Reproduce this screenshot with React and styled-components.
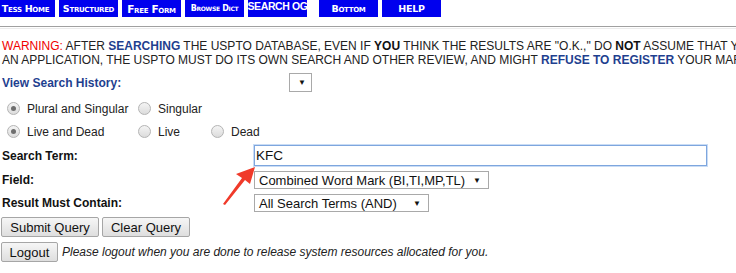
import React from 'react'
import styled, { createGlobalStyle } from 'styled-components'

const GlobalStyle = createGlobalStyle`
  html, body {
    margin: 0;
    padding: 0;
    background: #fff;
    overflow: hidden;
  }
  body {
    font-family: "Liberation Sans", Arial, sans-serif;
    font-size: 12px;
    color: #222;
  }
`;

const navItems = [
    { label: 'Tess Home', kind: 'caps' },
    { label: 'Structured', kind: 'caps' },
    { label: 'Free Form', kind: 'caps', big: true },
    { label: 'Browse Dict', kind: 'tiny' },
    { label: 'SEARCH OG', kind: 'plain' },
    { label: 'Bottom', kind: 'caps', gap: 12 },
    { label: 'HELP', kind: 'help' },
];

const Page = styled.div`
  position: relative;
  width: 1000px;
  padding-left: 2px;
`;

const NavBar = styled.div`
  display: flex;
  gap: 4px;
  height: 17px;
  margin-left: -6px;
`;

const NavButton = styled.div`
  width: 59px;
  height: 17px;
  flex: none;
  background: #0000ee;
  color: #fff;
  display: flex;
  align-items: ${p => (p.$kind === 'plain' ? 'flex-start' : 'center')};
  justify-content: center;
  font-family: ${p => (p.$kind === 'plain' ? '"Liberation Sans", Arial' : '"DejaVu Sans"')}, sans-serif;
  font-weight: bold;
  white-space: nowrap;
  overflow: hidden;
  margin-left: ${p => (p.$gap ? `${p.$gap - 4}px` : '0')};
  font-variant: ${p => (p.$kind === 'caps' || p.$kind === 'tiny' ? 'small-caps' : 'normal')};
  font-size: ${p =>
        p.$kind === 'plain' ? '10.5px' : p.$kind === 'tiny' ? '8px' : p.$big ? '10.5px' : '9.5px'};
  letter-spacing: ${p => (p.$kind === 'plain' ? '-0.4px' : '-0.3px')};
  line-height: ${p => (p.$kind === 'plain' ? '13px' : '17px')};
  padding-top: ${p => (p.$big ? '2px' : '0')};
  box-sizing: border-box;
`;

const Rule = styled.div`
  margin: 9px 0 0 -2px;
  height: 1px;
  border-top: 1px solid #a0a0a0;
  border-bottom: 1px solid #ececec;
`;

const Warning = styled.div`
  margin-top: 10px;
  font-size: 12px;
  line-height: 14px;
  white-space: nowrap;
  color: #222;
`;

const Red = styled.span`
  color: #f00000;
`;

const Strong = styled.b`
  color: ${p => (p.$navy ? '#1f3f8f' : '#111')};
`;

const Form = styled.div`
  display: flex;
  flex-direction: column;
  gap: 5px;
  margin-top: 6px;
`;

const Row = styled.div`
  display: flex;
  align-items: center;
  height: ${p => p.$h || 20}px;
`;

const Label = styled.div`
  width: ${p => p.$w || 252}px;
  flex: none;
  font-weight: bold;
  color: ${p => (p.$navy ? '#1f3f8f' : '#111')};
`;

const RadioRows = styled.div`
  display: flex;
  flex-direction: column;
  margin-bottom: -3px;
`;

const RadioRow = styled.div`
  display: flex;
  align-items: center;
  height: 23px;
`;

const RadioItem = styled.label`
  display: flex;
  align-items: center;
  width: ${p => p.$w}px;
  flex: none;
  color: #222;
`;

const RadioDot = styled.span`
  width: 11px;
  height: 11px;
  margin: 0 7px 0 5px;
  border-radius: 50%;
  border: 1px solid #b4b4b4;
  background: linear-gradient(#f4f4f4, #dcdcdc);
  display: inline-flex;
  align-items: center;
  justify-content: center;
  flex: none;
  &::after {
    content: '';
    width: 5px;
    height: 5px;
    border-radius: 50%;
    background: #6e6e6e;
    display: ${p => (p.$on ? 'block' : 'none')};
  }
`;

const TextInput = styled.input`
  width: 453px;
  height: 21px;
  box-sizing: border-box;
  border: 1px solid #7ea6de;
  box-shadow: 0 0 0 1px #c9dcf5;
  outline: none;
  padding: 0 1px;
  font-family: "Liberation Sans", Arial, sans-serif;
  font-size: 13.5px;
  color: #111;
`;

const FakeSelect = styled.div`
  width: ${p => p.$w}px;
  height: ${p => p.$h || 18}px;
  box-sizing: border-box;
  border: 1px solid #a9a9a9;
  background: #fff;
  display: flex;
  align-items: center;
  justify-content: space-between;
  padding: 0 7px 0 4px;
  font-size: 13px;
  color: #111;
  white-space: nowrap;
`;

const Caret = styled.span`
  font-size: 8px;
  color: #111;
  margin-right: ${p => p.$mr || 0}px;
`;

const ButtonRow = styled.div`
  display: flex;
  align-items: center;
  gap: 3px;
  height: 20px;
  margin-left: -1px;
`;

const Button = styled.button`
  height: 20px;
  box-sizing: border-box;
  padding: 0 6px;
  border: 1px solid #a6a6a6;
  border-radius: 2px;
  background: linear-gradient(#f6f6f6, #dedede);
  font-family: "Liberation Sans", Arial, sans-serif;
  font-size: 13px;
  color: #111;
  width: ${p => p.$w}px;
`;

const Note = styled.i`
  font-size: 12px;
  line-height: 14px;
  color: #222;
  margin-left: 1px;
`;

const Arrow = styled.svg`
  position: absolute;
  left: 217px;
  top: 164px;
`;

const App = () => {
    return (
        <>
            <GlobalStyle />
            <Page>
                <NavBar>
                    {navItems.map(item => (
                        <NavButton key={item.label} $kind={item.kind} $big={item.big} $gap={item.gap}>
                            {item.label}
                        </NavButton>
                    ))}
                </NavBar>
                <Rule />
                <Warning>
                    <Red>WARNING:</Red> AFTER <Strong $navy>SEARCHING</Strong> THE USPTO DATABASE, EVEN IF <Strong>YOU</Strong> THINK THE RESULTS ARE "O.K.," DO <Strong>NOT</Strong> ASSUME THAT YOUR MARK CAN BE REGISTERED AT THE USPTO. AFTER YOU FILE
                    <br />
                    AN APPLICATION, THE USPTO MUST DO ITS OWN SEARCH AND OTHER REVIEW, AND MIGHT <Strong $navy>REFUSE TO REGISTER</Strong> YOUR MARK.
                </Warning>
                <Form>
                    <Row $h={19}>
                        <Label $navy $w={287}>View Search History:</Label>
                        <FakeSelect $w={23} $h={19}>
                            <span />
                            <Caret $mr={-2}>▼</Caret>
                        </FakeSelect>
                    </Row>
                    <RadioRows>
                        <RadioRow>
                            <RadioItem $w={131}><RadioDot $on />Plural and Singular</RadioItem>
                            <RadioItem $w={80}><RadioDot />Singular</RadioItem>
                        </RadioRow>
                        <RadioRow>
                            <RadioItem $w={131}><RadioDot $on />Live and Dead</RadioItem>
                            <RadioItem $w={73}><RadioDot />Live</RadioItem>
                            <RadioItem $w={80}><RadioDot />Dead</RadioItem>
                        </RadioRow>
                    </RadioRows>
                    <Row $h={21}>
                        <Label>Search Term:</Label>
                        <TextInput defaultValue="KFC" />
                    </Row>
                    <Row $h={18}>
                        <Label>Field:</Label>
                        <FakeSelect $w={235}>
                            Combined Word Mark (BI,TI,MP,TL)
                            <Caret>▼</Caret>
                        </FakeSelect>
                    </Row>
                    <Row $h={18}>
                        <Label>Result Must Contain:</Label>
                        <FakeSelect $w={175}>
                            All Search Terms (AND)
                            <Caret>▼</Caret>
                        </FakeSelect>
                    </Row>
                    <ButtonRow>
                        <Button $w={98}>Submit Query</Button>
                        <Button $w={88}>Clear Query</Button>
                    </ButtonRow>
                    <ButtonRow>
                        <Button $w={57}>Logout</Button>
                        <Note>Please logout when you are done to release system resources allocated for you.</Note>
                    </ButtonRow>
                </Form>
                {/* red annotation arrow pointing at the search box */}
                <Arrow width="40" height="42" viewBox="0 0 40 42">
                    <path d="M38 3 L19 10 L25 14 L6 40 L8 41 L28 16 L33 20 Z" fill="#f03a2a" />
                </Arrow>
            </Page>
        </>
    );
};

export default App;
